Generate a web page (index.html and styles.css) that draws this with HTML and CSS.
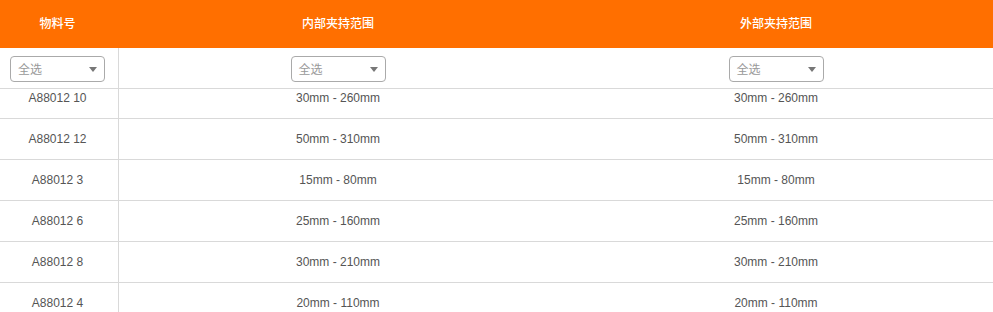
FILE: index.html
```html
<!DOCTYPE html>
<html lang="zh">
<head>
<meta charset="utf-8">
<link rel="stylesheet" href="styles.css">
</head>
<body>
<div class="table">
  <div class="row head">
    <div class="cell c1">物料号</div>
    <div class="cell">内部夹持范围</div>
    <div class="cell">外部夹持范围</div>
  </div>
  <div class="row filter">
    <div class="cell c1"><div class="select"><span>全选</span><i class="arrow"></i></div></div>
    <div class="cell"><div class="select"><span>全选</span><i class="arrow"></i></div></div>
    <div class="cell"><div class="select"><span>全选</span><i class="arrow"></i></div></div>
  </div>
  <div class="scroll">
    <div class="rows">
      <div class="row data"><div class="cell c1">A88012 10</div><div class="cell">30mm - 260mm</div><div class="cell">30mm - 260mm</div></div>
      <div class="row data"><div class="cell c1">A88012 12</div><div class="cell">50mm - 310mm</div><div class="cell">50mm - 310mm</div></div>
      <div class="row data"><div class="cell c1">A88012 3</div><div class="cell">15mm - 80mm</div><div class="cell">15mm - 80mm</div></div>
      <div class="row data"><div class="cell c1">A88012 6</div><div class="cell">25mm - 160mm</div><div class="cell">25mm - 160mm</div></div>
      <div class="row data"><div class="cell c1">A88012 8</div><div class="cell">30mm - 210mm</div><div class="cell">30mm - 210mm</div></div>
      <div class="row data"><div class="cell c1">A88012 4</div><div class="cell">20mm - 110mm</div><div class="cell">20mm - 110mm</div></div>
    </div>
  </div>
</div>
</body>
</html>
```
FILE: styles.css
```css
html, body {
  margin: 0;
  padding: 0;
  overflow: hidden;
  background: #fff;
}
body {
  font-family: "Liberation Sans", Arial, "Noto Sans CJK SC", sans-serif;
  font-size: 12px;
  color: #555;
}
.table {
  width: 993px;
  overflow: hidden;
}
.row {
  display: grid;
  grid-template-columns: 119px 438px 438px;
}
.cell {
  display: flex;
  align-items: center;
  justify-content: center;
}
.c1 {
  padding-right: 3px;
}
.head {
  height: 48px;
  background: #ff6f00;
  color: #fff;
  font-family: "Noto Sans CJK SC", sans-serif;
  font-weight: 500;
}
.head .cell {
  padding-bottom: 3px;
}
.head .c1 {
  padding-right: 4px;
}
.filter {
  height: 40px;
  border-bottom: 1px solid #d9d9d9;
}
.filter .c1, .data .c1 {
  border-right: 1px solid #d9d9d9;
}
.select {
  box-sizing: border-box;
  width: 95px;
  height: 26px;
  margin-top: 1px;
  border: 1px solid #aaa;
  border-radius: 4px;
  display: flex;
  align-items: center;
  justify-content: space-between;
  padding: 0 7px 0 7px;
  color: #999;
  font-family: "Noto Sans CJK SC", sans-serif;
  font-size: 12px;
}
.arrow {
  width: 0;
  height: 0;
  border-left: 4px solid transparent;
  border-right: 4px solid transparent;
  border-top: 5px solid #777;
  margin-top: 1px;
}
.scroll {
  height: 223px;
  overflow: hidden;
}
.rows {
  margin-top: -11px;
}
.data {
  height: 40px;
  border-bottom: 1px solid #d9d9d9;
}
```
